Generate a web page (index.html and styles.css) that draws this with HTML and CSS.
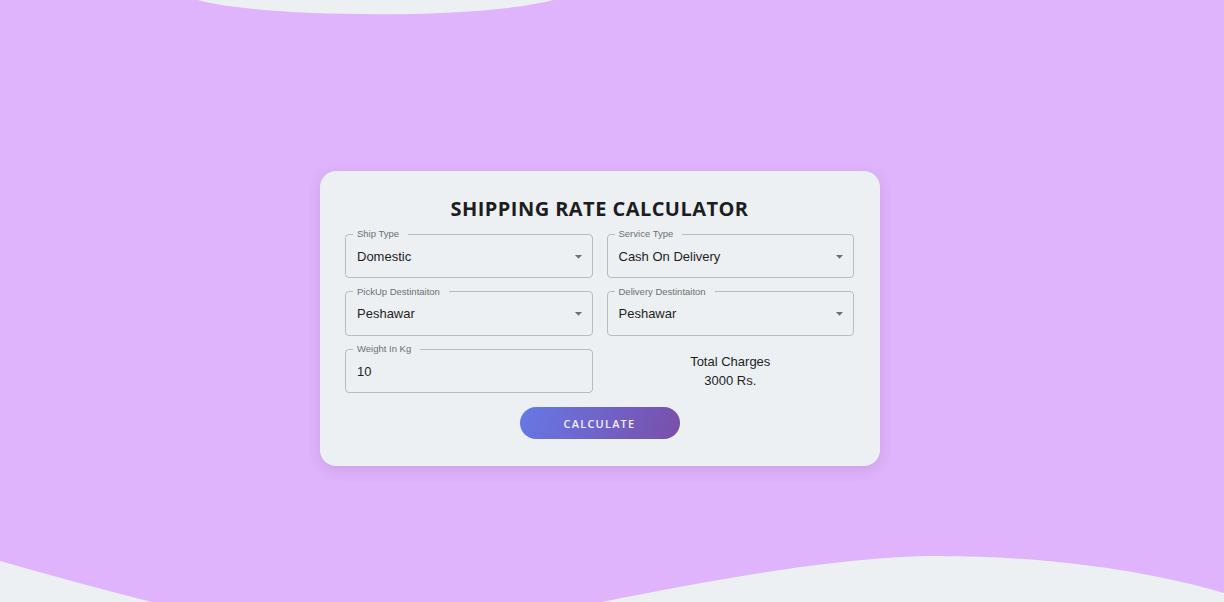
FILE: index.html
```html
<!DOCTYPE html>
<html lang="en">
<head>
<meta charset="utf-8">
<title>Shipping Rate Calculator</title>
<link rel="stylesheet" href="styles.css">
</head>
<body>
<svg class="waves" viewBox="0 0 1224 602" preserveAspectRatio="none" aria-hidden="true">
  <path class="wave" d="M198 0 C 260 18 480 20 553 0 Z"/>
  <path class="wave" d="M0 561 C 110 592 280 640 380 640 C 460 640 760 556 937 556 C 1080 556 1180 580 1224 593 L1224 602 L0 602 Z"/>
</svg>
<main class="wrap">
  <form class="card">
    <h1 class="title">SHIPPING RATE CALCULATOR</h1>
    <div class="grid">
      <fieldset class="field">
        <legend>Ship Type</legend>
        <div class="control"><span class="value">Domestic</span><svg class="caret" viewBox="0 0 24 24"><path d="M7 10l5 5 5-5z"/></svg></div>
      </fieldset>
      <fieldset class="field">
        <legend>Service Type</legend>
        <div class="control"><span class="value">Cash On Delivery</span><svg class="caret" viewBox="0 0 24 24"><path d="M7 10l5 5 5-5z"/></svg></div>
      </fieldset>
      <fieldset class="field">
        <legend>PickUp Destintaiton</legend>
        <div class="control"><span class="value">Peshawar</span><svg class="caret" viewBox="0 0 24 24"><path d="M7 10l5 5 5-5z"/></svg></div>
      </fieldset>
      <fieldset class="field">
        <legend>Delivery Destintaiton</legend>
        <div class="control"><span class="value">Peshawar</span><svg class="caret" viewBox="0 0 24 24"><path d="M7 10l5 5 5-5z"/></svg></div>
      </fieldset>
      <fieldset class="field">
        <legend>Weight In Kg</legend>
        <div class="control"><span class="value">10</span></div>
      </fieldset>
      <div class="total">
        <div>Total Charges</div>
        <div>3000 Rs.</div>
      </div>
    </div>
    <div class="actions">
      <button type="button" class="btn">CALCULATE</button>
    </div>
  </form>
</main>
</body>
</html>
```

FILE: styles.css
```css
html, body {
  margin: 0;
  padding: 0;
}
body {
  width: 1224px;
  height: 602px;
  overflow: hidden;
  background: #dfb4fc;
  position: relative;
  font-family: "Liberation Sans", Arial, sans-serif;
}
.waves {
  position: absolute;
  left: 0;
  top: 0;
  width: 1224px;
  height: 602px;
  z-index: 0;
}
.wave {
  fill: #ecf0f3;
}
.wrap {
  position: relative;
  z-index: 1;
  display: flex;
  justify-content: center;
  padding: 171px 24px 0 0;
}
.card {
  width: 560px;
  box-sizing: border-box;
  background: #ecf0f3;
  border-radius: 16px;
  padding: 26px 26px 27px 25px;
  box-shadow: 0 4px 14px rgba(90, 40, 120, 0.14);
}
.title {
  margin: 0 0 7px;
  text-align: center;
  font-family: "Open Sans", sans-serif;
  font-weight: 700;
  font-size: 20px;
  line-height: 24px;
  letter-spacing: 0.45px;
  color: #1d1d1f;
}
.grid {
  display: grid;
  grid-template-columns: 1fr 1fr;
  column-gap: 14px;
  row-gap: 7.5px;
}
.field {
  margin: 0;
  min-width: 0;
  border: 1px solid #b9bcbf;
  border-radius: 4px;
  padding: 0 5px 5px 7px;
}
.field legend {
  font-size: 9.5px;
  line-height: 12px;
  color: #6f6f6f;
  padding: 0 9px 0 4px;
}
.control {
  display: flex;
  align-items: center;
  height: 32px;
  padding-left: 4px;
}
.value {
  flex: 1;
  font-size: 13px;
  color: #1e1e1e;
}
.caret {
  width: 17px;
  height: 17px;
  fill: #6f6f6f;
}
.total {
  display: flex;
  flex-direction: column;
  justify-content: center;
  align-items: center;
  padding-top: 6px;
  font-size: 13px;
  line-height: 19px;
  color: #1e1e1e;
}
.actions {
  display: flex;
  justify-content: center;
  margin-top: 14px;
}
.btn {
  width: 160px;
  height: 32px;
  border: none;
  border-radius: 16px;
  background: linear-gradient(110deg, #6679e6 0%, #6f63c8 50%, #7a4fa8 100%);
  color: #f3f0ff;
  font-family: "Open Sans", sans-serif;
  font-weight: 600;
  font-size: 11px;
  letter-spacing: 1.2px;
  cursor: pointer;
}
```
